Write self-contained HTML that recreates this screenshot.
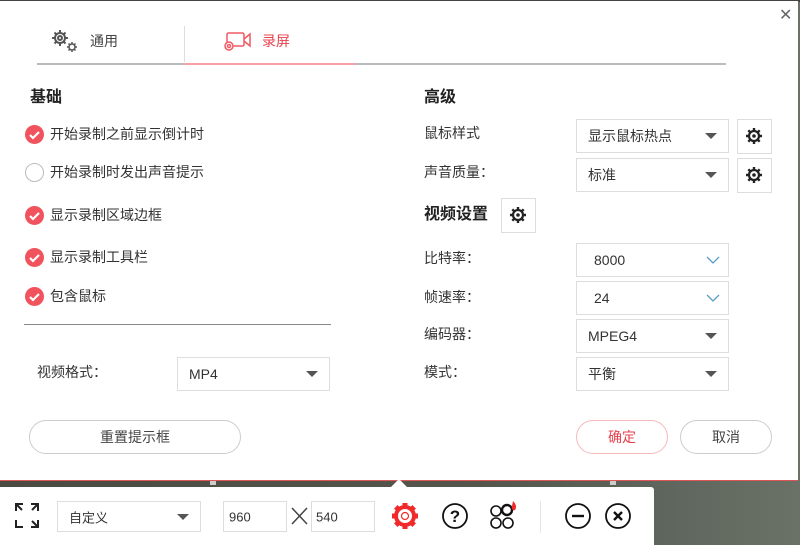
<!DOCTYPE html>
<html><head><meta charset="utf-8"><style>
*{margin:0;padding:0;box-sizing:border-box}
body{width:800px;height:545px;overflow:hidden;position:relative;background:linear-gradient(90deg,#4b4a42 0%,#55554c 60%,#5f675e 85%,#6a7268 100%);font-family:"Liberation Sans","Noto Sans CJK SC",sans-serif;color:#333;font-size:14px}
.a{position:absolute}
.dlg{left:0;top:1px;width:798px;height:480px;background:#fff;border-bottom:1px solid #d55}
.t{position:absolute;white-space:nowrap;line-height:18px;transform:translateY(-9px)}
.cb{position:absolute;width:19px;height:19px;border-radius:50%;background:#f0525e;transform:translateY(-9px)}
.cb.off{background:#fff;border:1px solid #bbb}
.sel{position:absolute;border:1px solid #ddd;background:#fff}
.sel span{position:absolute;left:11px;top:50%;transform:translateY(-50%);font-size:14px;color:#333}
.tri{position:absolute;right:11px;top:50%;margin-top:-3px;width:0;height:0;border-left:6px solid transparent;border-right:6px solid transparent;border-top:6px solid #555}
.gb{position:absolute;border:1px solid #ddd;background:#fff;width:35px;height:35px}
.btn{position:absolute;border:1px solid #ccc;border-radius:17px;height:34px;text-align:center;line-height:32px;font-size:14px;color:#444}
</style></head><body>
<div class="a" style="left:0;top:0;width:800px;height:2px;background:#444"></div>
<div class="a dlg">
</div>
<!-- tabs -->
<svg class="a" style="left:50px;top:28px" width="30" height="26" viewBox="0 0 30 26"><g fill="none" stroke="#555" stroke-width="2"><circle cx="10" cy="10" r="5"/><circle cx="10" cy="10" r="2"/><path d="M10 2v3M10 15v3M2 10h3M15 10h3M4.5 4.5l2 2M13.5 13.5l2 2M4.5 15.5l2-2M13.5 6.5l2-2"/><circle cx="22" cy="19" r="3" stroke-width="1.5"/><path d="M22 14v2M22 22v2M17 19h2M25 19h2M18.5 15.5l1.3 1.3M24.2 21.2l1.3 1.3M18.5 22.5l1.3-1.3M24.2 16.8l1.3-1.3" stroke-width="1.5"/></g></svg>
<div class="t" style="left:90px;top:41px;font-size:14px;color:#444">通用</div>
<div class="a" style="left:184px;top:26px;width:1px;height:36px;background:#ddd"></div>
<svg class="a" style="left:223px;top:30px" width="30" height="22" viewBox="0 0 30 22"><g fill="none" stroke="#f05a64" stroke-width="1.5"><rect x="4" y="3" width="17" height="13" rx="1.5"/><path d="M21 9l6-5v12l-6-5"/><circle cx="6" cy="16" r="4" fill="#fff"/><circle cx="6" cy="16" r="1.5"/></g></svg>
<div class="t" style="left:262px;top:41px;font-size:14px;color:#e8414e">录屏</div>
<div class="a" style="left:37px;top:63px;width:689px;height:2px;background:#bbb"></div>
<div class="a" style="left:184px;top:63px;width:171px;height:2px;background:#f7a0a6"></div>
<div class="a" style="left:779px;top:9px;font-size:16px;color:#666;line-height:14px">✕</div>
<!-- left -->
<div class="t" style="left:30px;top:98px;font-size:16px;font-weight:bold;color:#222">基础</div>
<div class="cb" style="left:25px;top:134px"></div><svg class="a" style="left:25px;top:125px" width="19" height="19"><path d="M5 10l3 3 6-6" stroke="#fff" stroke-width="2.2" fill="none"/></svg>
<div class="t" style="left:50px;top:134px">开始录制之前显示倒计时</div>
<div class="cb off" style="left:25px;top:172px"></div>
<div class="t" style="left:50px;top:172px">开始录制时发出声音提示</div>
<div class="cb" style="left:25px;top:215px"></div><svg class="a" style="left:25px;top:206px" width="19" height="19"><path d="M5 10l3 3 6-6" stroke="#fff" stroke-width="2.2" fill="none"/></svg>
<div class="t" style="left:50px;top:215px">显示录制区域边框</div>
<div class="cb" style="left:25px;top:257px"></div><svg class="a" style="left:25px;top:248px" width="19" height="19"><path d="M5 10l3 3 6-6" stroke="#fff" stroke-width="2.2" fill="none"/></svg>
<div class="t" style="left:50px;top:257px">显示录制工具栏</div>
<div class="cb" style="left:25px;top:296px"></div><svg class="a" style="left:25px;top:287px" width="19" height="19"><path d="M5 10l3 3 6-6" stroke="#fff" stroke-width="2.2" fill="none"/></svg>
<div class="t" style="left:50px;top:296px">包含鼠标</div>
<div class="a" style="left:24px;top:324px;width:307px;height:1px;background:#888"></div>
<div class="t" style="left:37px;top:372px">视频格式：</div>
<div class="sel" style="left:177px;top:357px;width:153px;height:34px"><span>MP4</span><div class="tri"></div></div>
<div class="btn" style="left:29px;top:420px;width:212px">重置提示框</div>
<!-- right -->
<div class="t" style="left:424px;top:98px;font-size:16px;font-weight:bold;color:#222">高级</div>
<div class="t" style="left:424px;top:133px">鼠标样式</div>
<div class="sel" style="left:576px;top:119px;width:153px;height:34px"><span>显示鼠标热点</span><div class="tri"></div></div>
<div class="gb" style="left:737px;top:119px"></div>
<div class="t" style="left:424px;top:172px">声音质量：</div>
<div class="sel" style="left:576px;top:158px;width:153px;height:34px"><span>标准</span><div class="tri"></div></div>
<div class="gb" style="left:737px;top:158px"></div>
<div class="t" style="left:424px;top:215px;font-size:16px;font-weight:bold;color:#222">视频设置</div>
<div class="gb" style="left:501px;top:198px"></div>
<svg class="a" style="left:0;top:0" width="800" height="545">
<defs><g id="g"><circle r="5" fill="none" stroke="#222" stroke-width="2.2"/><circle r="1.8" fill="#222"/><path d="M0-8v3M0 5v3M-8 0h3M5 0h3M-5.7-5.7l2 2M3.7 3.7l2 2M-5.7 5.7l2-2M3.7-3.7l2-2" stroke="#222" stroke-width="2.4"/></g></defs>
<use href="#g" x="754" y="136"/><use href="#g" x="754" y="175"/><use href="#g" x="518" y="215"/>
</svg>
<div class="t" style="left:424px;top:258px">比特率：</div>
<div class="sel" style="left:576px;top:243px;width:153px;height:34px"><span style="left:17px">8000</span><svg class="a" style="right:8px;top:12px" width="14" height="9"><path d="M1 1l6 6 6-6" stroke="#5a9ec8" fill="none" stroke-width="1.3"/></svg></div>
<div class="t" style="left:424px;top:297px">帧速率：</div>
<div class="sel" style="left:576px;top:281px;width:153px;height:34px"><span style="left:17px">24</span><svg class="a" style="right:8px;top:12px" width="14" height="9"><path d="M1 1l6 6 6-6" stroke="#5a9ec8" fill="none" stroke-width="1.3"/></svg></div>
<div class="t" style="left:424px;top:334px">编码器：</div>
<div class="sel" style="left:576px;top:319px;width:153px;height:34px"><span>MPEG4</span><div class="tri"></div></div>
<div class="t" style="left:424px;top:372px">模式：</div>
<div class="sel" style="left:576px;top:357px;width:153px;height:34px"><span>平衡</span><div class="tri"></div></div>
<div class="btn" style="left:576px;top:420px;width:92px;border-color:#f8b8bc;color:#e8414e">确定</div>
<div class="btn" style="left:680px;top:420px;width:92px">取消</div>
<!-- frame handles -->
<div class="a" style="left:210px;top:481px;width:6px;height:4px;background:#ccc"></div>
<div class="a" style="left:610px;top:481px;width:6px;height:4px;background:#ccc"></div>
<!-- toolbar -->
<div class="a" style="left:0;top:487px;width:654px;height:58px;background:#fff;border-radius:0 3px 0 0"></div>
<div class="a" style="left:390px;top:479px;width:0;height:0;border-left:9px solid transparent;border-right:9px solid transparent;border-bottom:9px solid #fff"></div>
<svg class="a" style="left:0;top:487px" width="654" height="58">
<g stroke="#222" stroke-width="2" fill="none"><path d="M16 24v-7h7M16 17l6 6M38 24v-7h-7M38 17l-6 6M16 33v7h7M38 33v7h-7M38 40l-6-6"/></g>
<path d="M292 21l15 16M307 21l-15 16" stroke="#444" stroke-width="1.5"/>
<g transform="translate(405 29)"><circle r="9" fill="none" stroke="#f02a2a" stroke-width="4"/><circle r="3.5" fill="none" stroke="#f02a2a" stroke-width="1.2"/><g fill="#f02a2a"><rect x="-2.5" y="-13" width="5" height="5"/><rect x="-2.5" y="8" width="5" height="5"/><rect x="-13" y="-2.5" width="5" height="5"/><rect x="8" y="-2.5" width="5" height="5"/><rect x="-2.5" y="-13" width="5" height="5" transform="rotate(45)"/><rect x="-2.5" y="8" width="5" height="5" transform="rotate(45)"/><rect x="-13" y="-2.5" width="5" height="5" transform="rotate(45)"/><rect x="8" y="-2.5" width="5" height="5" transform="rotate(45)"/></g></g>
<circle cx="455" cy="29" r="12" fill="none" stroke="#111" stroke-width="1.8"/>
<text x="455" y="35" text-anchor="middle" font-family="Liberation Sans" font-weight="bold" font-size="17" fill="#111">?</text>
<g fill="none" stroke="#111" stroke-width="1.6"><circle cx="496" cy="24" r="5"/><circle cx="496" cy="36" r="5"/><circle cx="508" cy="36" r="5"/><circle cx="507" cy="23" r="5" stroke-width="2.4"/></g>
<path d="M513 14c3 3 4 6 2 9-2 1-4-1-3-4" fill="#f02a2a"/>
<rect x="540" y="14" width="1" height="32" fill="#e5e5e5"/>
<circle cx="578" cy="29" r="12" fill="none" stroke="#111" stroke-width="1.8"/><path d="M572 29h12" stroke="#111" stroke-width="2.4"/>
<circle cx="618" cy="29" r="12" fill="none" stroke="#111" stroke-width="1.8"/><path d="M614 25l8 8M622 25l-8 8" stroke="#111" stroke-width="2.4"/>
</svg>
<div class="sel" style="left:57px;top:501px;width:144px;height:31px"><span style="font-size:13px">自定义</span><div class="tri"></div></div>
<div class="sel" style="left:223px;top:501px;width:64px;height:31px"><span style="left:5px;font-size:13px">960</span></div>
<div class="sel" style="left:311px;top:501px;width:64px;height:31px"><span style="left:4px;font-size:13px">540</span></div>
</body></html>
